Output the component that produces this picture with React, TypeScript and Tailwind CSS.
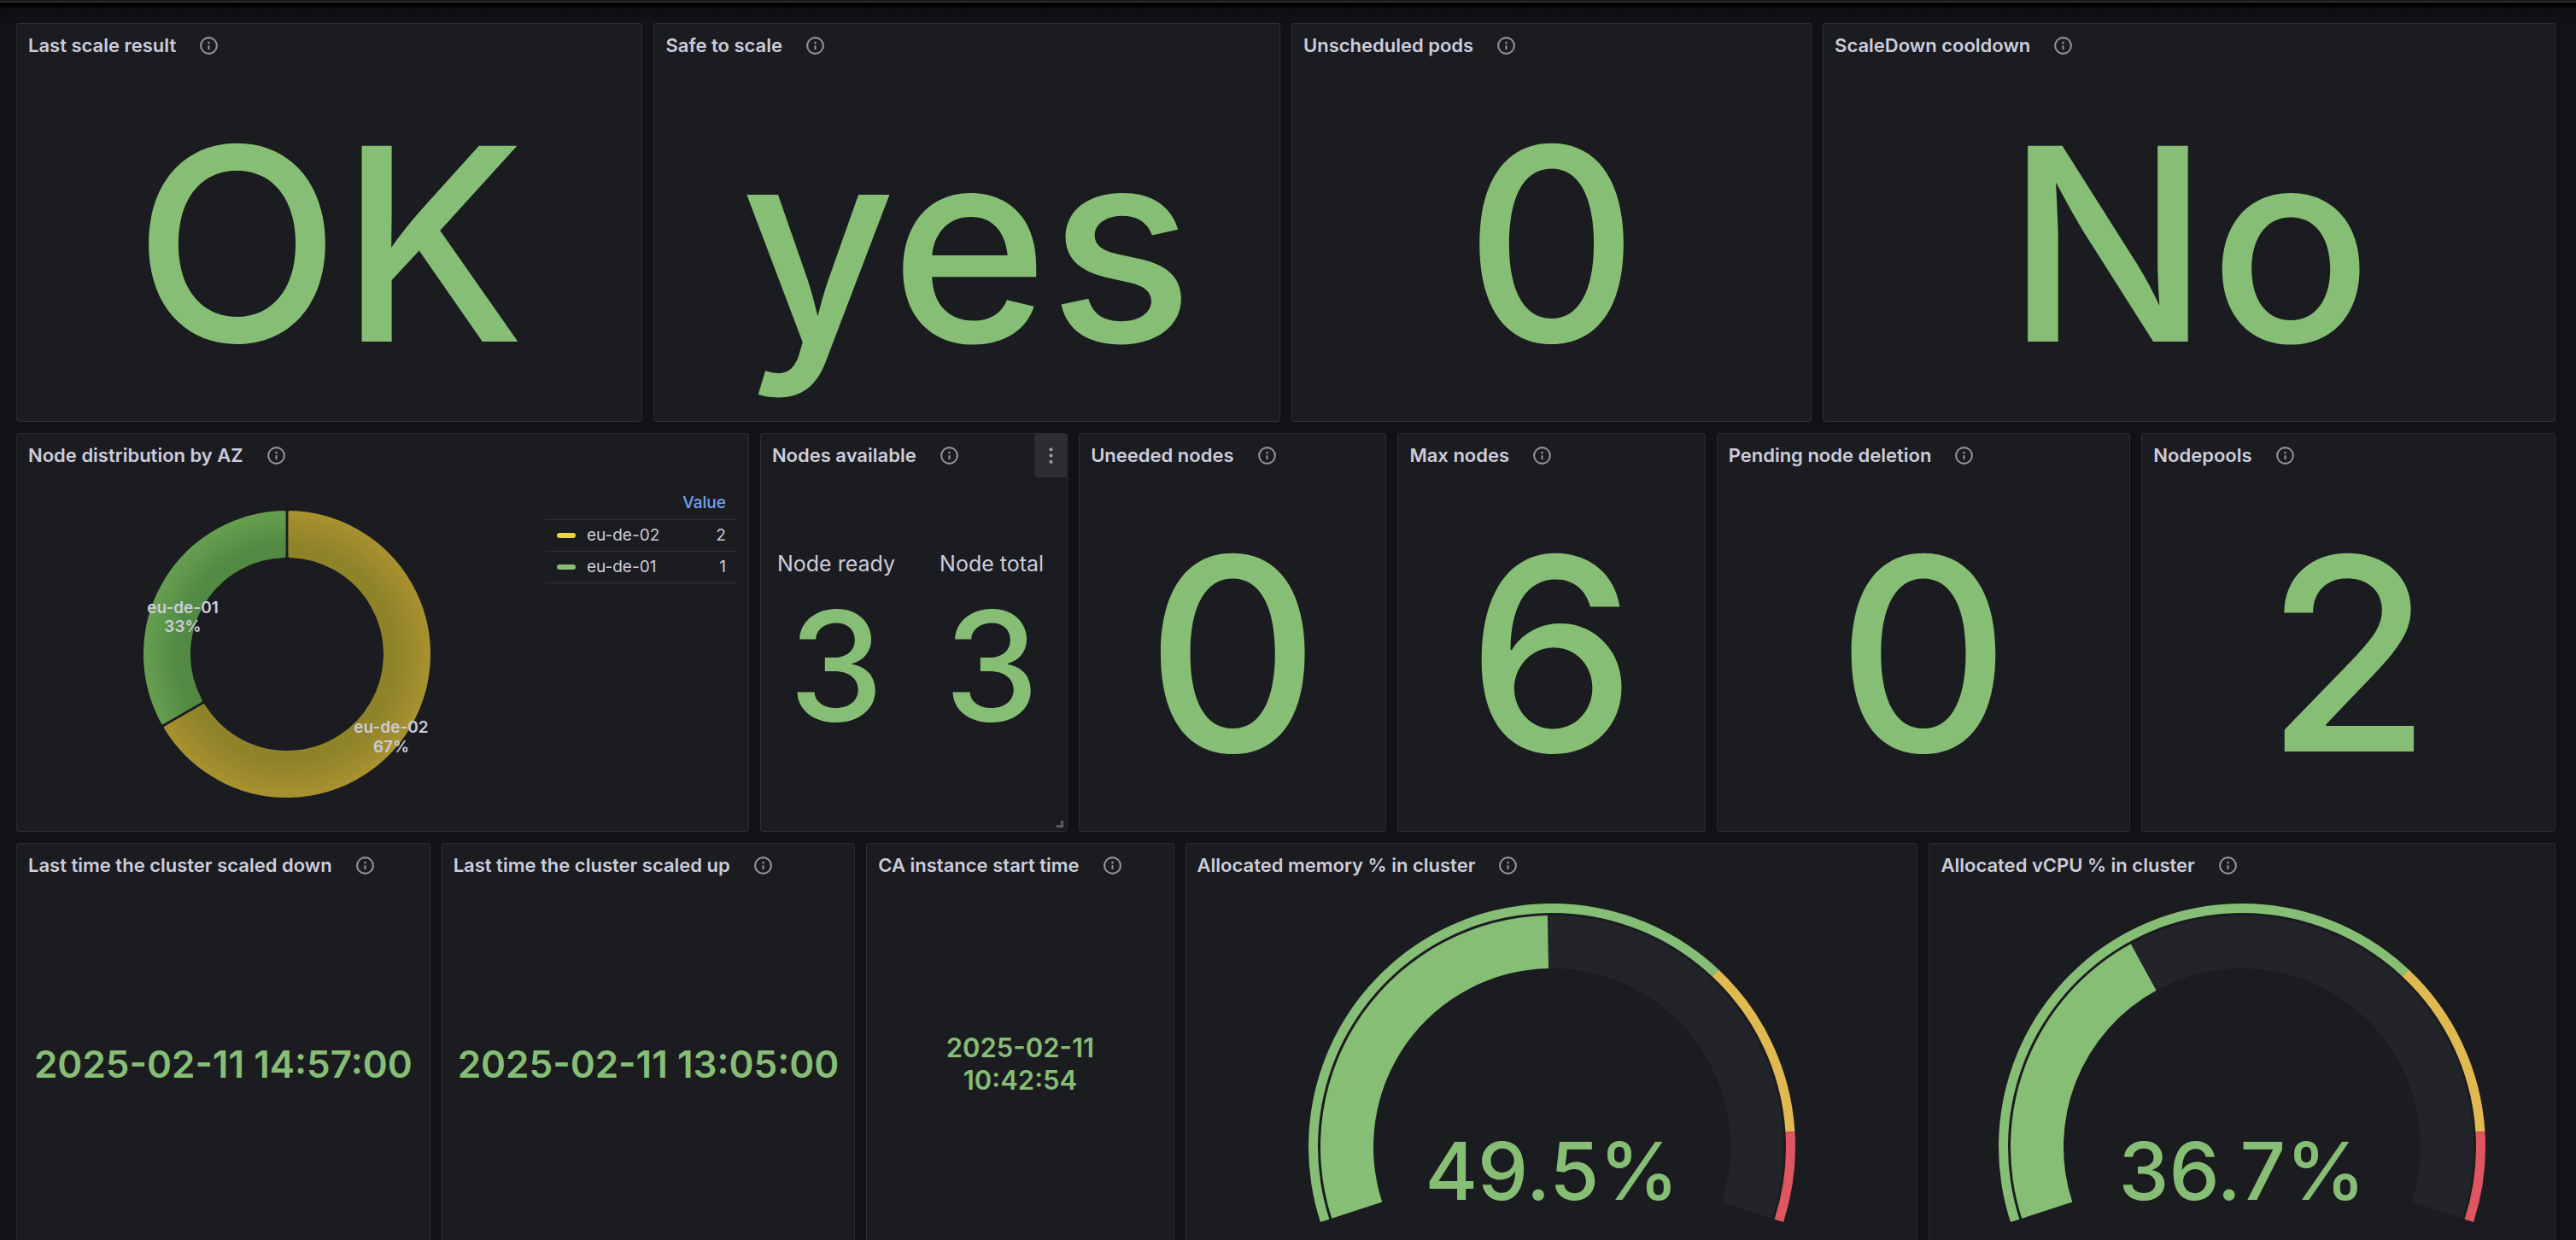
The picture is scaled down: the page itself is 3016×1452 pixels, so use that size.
import type { ReactNode } from "react";

const INFO_PATH =
  "M12,2A10,10,0,1,0,22,12,10.01114,10.01114,0,0,0,12,2Zm0,18a8,8,0,1,1,8-8A8.00917,8.00917,0,0,1,12,20Zm0-8.5a1,1,0,0,0-1,1v3a1,1,0,0,0,2,0v-3A1,1,0,0,0,12,11.5Zm0-4a1.25,1.25,0,1,0,1.25,1.25A1.25,1.25,0,0,0,12,7.5Z";

type PanelProps = {
  title: string;
  span: string;
  active?: boolean;
  children: ReactNode;
};

function Panel({ title, span, active = false, children }: PanelProps) {
  return (
    <section
      className={`relative flex h-[467px] flex-col rounded-[3px] border border-[#2d2e32] bg-[#1b1c1f] ${span}`}
    >
      <header className="flex h-[50px] items-center gap-[26px] pl-[13px]">
        <h2 className="text-[22px] leading-[30px] font-semibold whitespace-nowrap">{title}</h2>
        <button type="button" aria-label={`About ${title}`} className="text-[#92929f]">
          <svg viewBox="0 0 24 24" className="size-[25px]" fill="currentColor" aria-hidden="true">
            <path d={INFO_PATH} />
          </svg>
        </button>
        {active && (
          <button
            type="button"
            aria-label={`Menu for ${title}`}
            className="ml-auto flex h-[51px] w-[38px] items-center justify-center rounded-[3px] bg-[#2c2d31] text-[#9c9ca8]"
          >
            <svg viewBox="0 0 24 24" className="size-[25px]" fill="currentColor" aria-hidden="true">
              <circle cx="12" cy="5" r="2" />
              <circle cx="12" cy="12" r="2" />
              <circle cx="12" cy="19" r="2" />
            </svg>
          </button>
        )}
      </header>
      <div className="flex min-h-0 flex-1 items-center justify-center">{children}</div>
      {active && (
        <span className="absolute right-1 bottom-1 size-2 border-r-3 border-b-3 border-[#5c5d60]" />
      )}
    </section>
  );
}

function BigValue({ children }: { children: ReactNode }) {
  return (
    <p className="text-[315px] leading-[378px] font-medium whitespace-nowrap text-[#86be75]">
      {children}
    </p>
  );
}

function point(c: number, r: number, deg: number) {
  const a = ((deg - 90) * Math.PI) / 180;
  return `${(c + r * Math.cos(a)).toFixed(2)} ${(c + r * Math.sin(a)).toFixed(2)}`;
}

// Ring segment; `inset` trims both straight edges by a constant distance.
function ring(c: number, outer: number, inner: number, from: number, to: number, inset = 0) {
  const trimO = (Math.asin(inset / outer) * 180) / Math.PI;
  const trimI = (Math.asin(inset / inner) * 180) / Math.PI;
  const large = to - from > 180 ? 1 : 0;
  return [
    `M ${point(c, outer, from + trimO)}`,
    `A ${outer} ${outer} 0 ${large} 1 ${point(c, outer, to - trimO)}`,
    `L ${point(c, inner, to - trimI)}`,
    `A ${inner} ${inner} 0 ${large} 0 ${point(c, inner, from + trimI)}`,
    "Z",
  ].join(" ");
}

function Gauge({ value, label }: { value: number; label: string }) {
  const at = (pct: number) => -108 + (216 * pct) / 100;
  return (
    <svg viewBox="0 0 572 378" className="h-[378px] w-[572px] max-w-full" role="img" aria-label={label}>
      <path d={ring(286, 271, 209, at(value), at(100))} fill="#232429" />
      <path d={ring(286, 271, 209, at(0), at(value))} fill="#86be75" />
      <path d={ring(286, 285, 274, at(0), at(70))} fill="#86be75" />
      <path d={ring(286, 285, 274, at(70), at(90))} fill="#e1b951" />
      <path d={ring(286, 285, 274, at(90), at(100))} fill="#df5560" />
      <text x="286" y="348" textAnchor="middle" fontSize="94" fontWeight="500" fill="#86be75">
        {value}%
      </text>
    </svg>
  );
}

const zones = [
  { name: "eu-de-02", value: 2, swatch: "bg-[#eccf4e]" },
  { name: "eu-de-01", value: 1, swatch: "bg-[#86be75]" },
];

function Donut() {
  return (
    <svg viewBox="0 0 338 338" className="size-[338px]" role="img" aria-label="Node distribution by AZ">
      <defs>
        <radialGradient id="zone02" gradientUnits="userSpaceOnUse" cx="169" cy="169" r="168">
          <stop offset="0.75" stopColor="#8e8329" />
          <stop offset="1" stopColor="#a9912f" />
        </radialGradient>
        <radialGradient id="zone01" gradientUnits="userSpaceOnUse" cx="169" cy="169" r="168">
          <stop offset="0.75" stopColor="#528943" />
          <stop offset="1" stopColor="#669f50" />
        </radialGradient>
      </defs>
      <g strokeWidth="4" strokeLinejoin="round">
        <path d={ring(169, 166, 115, 0, 240, 3.4)} fill="url(#zone02)" stroke="url(#zone02)" />
        <path d={ring(169, 166, 115, 240, 360, 3.4)} fill="url(#zone01)" stroke="url(#zone01)" />
      </g>
      <g fontSize="19" fontWeight="600" fill="#ccccdc" textAnchor="middle">
        <text x="47" y="121">eu-de-01</text>
        <text x="47" y="143">33%</text>
        <text x="291" y="261">eu-de-02</text>
        <text x="291" y="284">67%</text>
      </g>
    </svg>
  );
}

function ZoneChart() {
  return (
    <div className="flex flex-1 items-center self-stretch px-[13px]">
      <div className="flex flex-1 justify-center">
        <Donut />
      </div>
      <table className="mt-[13px] w-[224px] border-collapse self-start text-[19px] leading-[24px]">
        <thead>
          <tr className="h-[37px] border-b border-[#303136]">
            <th aria-label="Zone" />
            <th className="pr-[13px] text-right font-medium text-[#779ff5]">Value</th>
          </tr>
        </thead>
        <tbody>
          {zones.map((z) => (
            <tr key={z.name} className="h-[37px] border-b border-[#303136]">
              <td className="pl-[13px]">
                <span className="flex items-center gap-[13px]">
                  <span className={`h-[6px] w-[22px] rounded-[3px] ${z.swatch}`} />
                  {z.name}
                </span>
              </td>
              <td className="pr-[13px] text-right">{z.value}</td>
            </tr>
          ))}
        </tbody>
      </table>
    </div>
  );
}

function LabeledValue({ label, value }: { label: string; value: number }) {
  return (
    <div className="flex flex-1 flex-col items-center">
      <p className="text-[25px] leading-[29px] whitespace-nowrap">{label}</p>
      <p className="text-[177px] leading-[210px] font-medium text-[#86be75]">{value}</p>
    </div>
  );
}

export default function App() {
  return (
    <div className="h-screen overflow-hidden bg-[#111217] font-['Inter','Liberation_Sans',sans-serif] text-[#ccccdc]">
      <div className="h-[3px] border-b border-[#3a3b3e] bg-[#1b1c1f]" />
      <div className="h-6 bg-linear-to-b from-black via-[#0e0f13] via-30% to-[#111217]" />
      <main className="grid grid-cols-24 gap-[13px] pr-6 pl-[19px]">
        <Panel title="Last scale result" span="col-span-6">
          <BigValue>OK</BigValue>
        </Panel>
        <Panel title="Safe to scale" span="col-span-6">
          <BigValue>yes</BigValue>
        </Panel>
        <Panel title="Unscheduled pods" span="col-span-5">
          <BigValue>0</BigValue>
        </Panel>
        <Panel title="ScaleDown cooldown" span="col-span-7">
          <BigValue>No</BigValue>
        </Panel>

        <Panel title="Node distribution by AZ" span="col-span-7">
          <ZoneChart />
        </Panel>
        <Panel title="Nodes available" span="col-span-3" active>
          <div className="flex flex-1 gap-[18px] px-[6px]">
            <LabeledValue label="Node ready" value={3} />
            <LabeledValue label="Node total" value={3} />
          </div>
        </Panel>
        <Panel title="Uneeded nodes" span="col-span-3">
          <BigValue>0</BigValue>
        </Panel>
        <Panel title="Max nodes" span="col-span-3">
          <BigValue>6</BigValue>
        </Panel>
        <Panel title="Pending node deletion" span="col-span-4">
          <BigValue>0</BigValue>
        </Panel>
        <Panel title="Nodepools" span="col-span-4">
          <BigValue>2</BigValue>
        </Panel>

        <Panel title="Last time the cluster scaled down" span="col-span-4">
          <p className="text-[44px] leading-[54px] font-semibold whitespace-nowrap text-[#86be75]">
            2025-02-11 14:57:00
          </p>
        </Panel>
        <Panel title="Last time the cluster scaled up" span="col-span-4">
          <p className="text-[44px] leading-[54px] font-semibold whitespace-nowrap text-[#86be75]">
            2025-02-11 13:05:00
          </p>
        </Panel>
        <Panel title="CA instance start time" span="col-span-3">
          <p className="text-center text-[31px] leading-[38px] font-semibold text-[#86be75]">
            2025-02-11
            <br />
            10:42:54
          </p>
        </Panel>
        <Panel title="Allocated memory % in cluster" span="col-span-7">
          <Gauge value={49.5} label="Allocated memory" />
        </Panel>
        <Panel title="Allocated vCPU % in cluster" span="col-span-6">
          <Gauge value={36.7} label="Allocated vCPU" />
        </Panel>
      </main>
    </div>
  );
}
